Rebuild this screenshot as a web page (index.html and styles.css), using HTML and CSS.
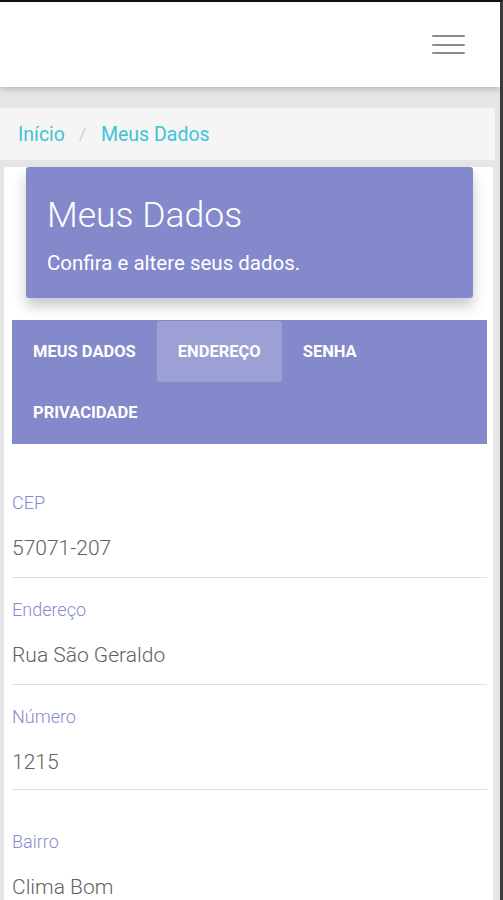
FILE: index.html
```html
<!DOCTYPE html>
<html lang="pt-BR">
<head>
<meta charset="utf-8">
<title>Meus Dados</title>
<link rel="stylesheet" href="styles.css">
</head>
<body>
<div class="frame">
  <header class="topbar">
    <button class="burger" aria-label="Menu">
      <span></span><span></span><span></span>
    </button>
  </header>
  <main class="main">
    <nav class="crumbs">
      <a class="crumb">Início</a>
      <span class="sep">/</span>
      <a class="crumb">Meus Dados</a>
    </nav>
    <section class="card">
      <div class="card-head">
        <h1 class="title">Meus Dados</h1>
        <p class="subtitle">Confira e altere seus dados.</p>
      </div>
      <div class="tabs">
        <div class="tab">MEUS DADOS</div>
        <div class="tab active">ENDEREÇO</div>
        <div class="tab">SENHA</div>
        <div class="tab">PRIVACIDADE</div>
      </div>
      <div class="fields">
        <div class="field">
          <div class="label">CEP</div>
          <div class="value">57071-207</div>
        </div>
        <div class="field">
          <div class="label">Endereço</div>
          <div class="value">Rua São Geraldo</div>
        </div>
        <div class="field">
          <div class="label">Número</div>
          <div class="value">1215</div>
        </div>
        <div class="field field-spaced">
          <div class="label">Bairro</div>
          <div class="value">Clima Bom</div>
        </div>
      </div>
    </section>
  </main>
</div>
</body>
</html>
```
FILE: styles.css
```css
* { box-sizing: border-box; }
html, body { margin: 0; padding: 0; }
body {
  background: #e6e6e6;
  font-family: Roboto, "Noto Sans", "Liberation Sans", sans-serif;
  height: 900px;
  overflow: hidden;
}
.frame {
  border-top: 2px solid #111;
  border-right: 3px solid #3c3c3c;
  height: 900px;
  overflow: hidden;
  background: #e6e6e6;
}
.topbar {
  height: 85px;
  background: #fff;
  display: flex;
  align-items: center;
  justify-content: flex-end;
  padding-right: 35px;
  box-shadow: 0 2px 6px rgba(0,0,0,0.22);
  position: relative;
  z-index: 2;
}
.burger {
  border: 0;
  background: transparent;
  padding: 0;
  display: flex;
  flex-direction: column;
  gap: 6.5px;
  width: 33px;
}
.burger span {
  display: block;
  height: 2px;
  background: #8c8c8c;
  border-radius: 1px;
}
.main {
  padding-top: 21px;
}
.crumbs {
  height: 52px;
  margin-right: 5px;
  background: #f5f5f5;
  display: flex;
  align-items: center;
  padding-left: 18px;
  font-size: 19.5px;
}
.crumb { color: #3fc3d7; }
.sep { color: #cfcfcf; margin: 0 15px 0 14px; font-size: 17px; }
.card {
  margin: 35px 7px 0 4px;
  background: #fff;
  border-radius: 3px;
  padding-bottom: 40px;
}
.card-head {
  margin: -28px 20px 0 22px;
  height: 131px;
  background: #8489cb;
  border-radius: 3px;
  padding: 27px 22px 0 21px;
  color: #fff;
  box-shadow: 0 8px 14px rgba(0,0,0,0.22);
}
.title {
  margin: 0;
  font-weight: 300;
  font-size: 35.5px;
  line-height: 42px;
}
.subtitle {
  margin: 15px 0 0;
  font-size: 20.5px;
  line-height: 24px;
  font-weight: 400;
}
.tabs {
  margin: 22px 6px 0 8px;
  background: #8489cb;
  padding: 1px 0;
  display: flex;
  flex-wrap: wrap;
}
.tab {
  height: 61px;
  line-height: 61px;
  padding: 0 21px;
  color: #fff;
  font-size: 16.5px;
  font-weight: 700;
  border-radius: 3px;
}
.tab.active { background: rgba(255,255,255,0.2); }
.fields {
  padding: 27px 6px 0 8px;
}
.field {
  padding: 22px 0 17px;
  border-bottom: 1px solid #dedede;
}
.field:nth-child(3) { padding-bottom: 15px; }
.field-spaced { padding-top: 42px; border-bottom: 0; }
.label {
  font-size: 18px;
  line-height: 20px;
  font-weight: 300;
  color: #868bcc;
}
.value {
  margin-top: 23px;
  font-size: 21px;
  line-height: 24px;
  font-weight: 300;
  color: #626262;
}
```
